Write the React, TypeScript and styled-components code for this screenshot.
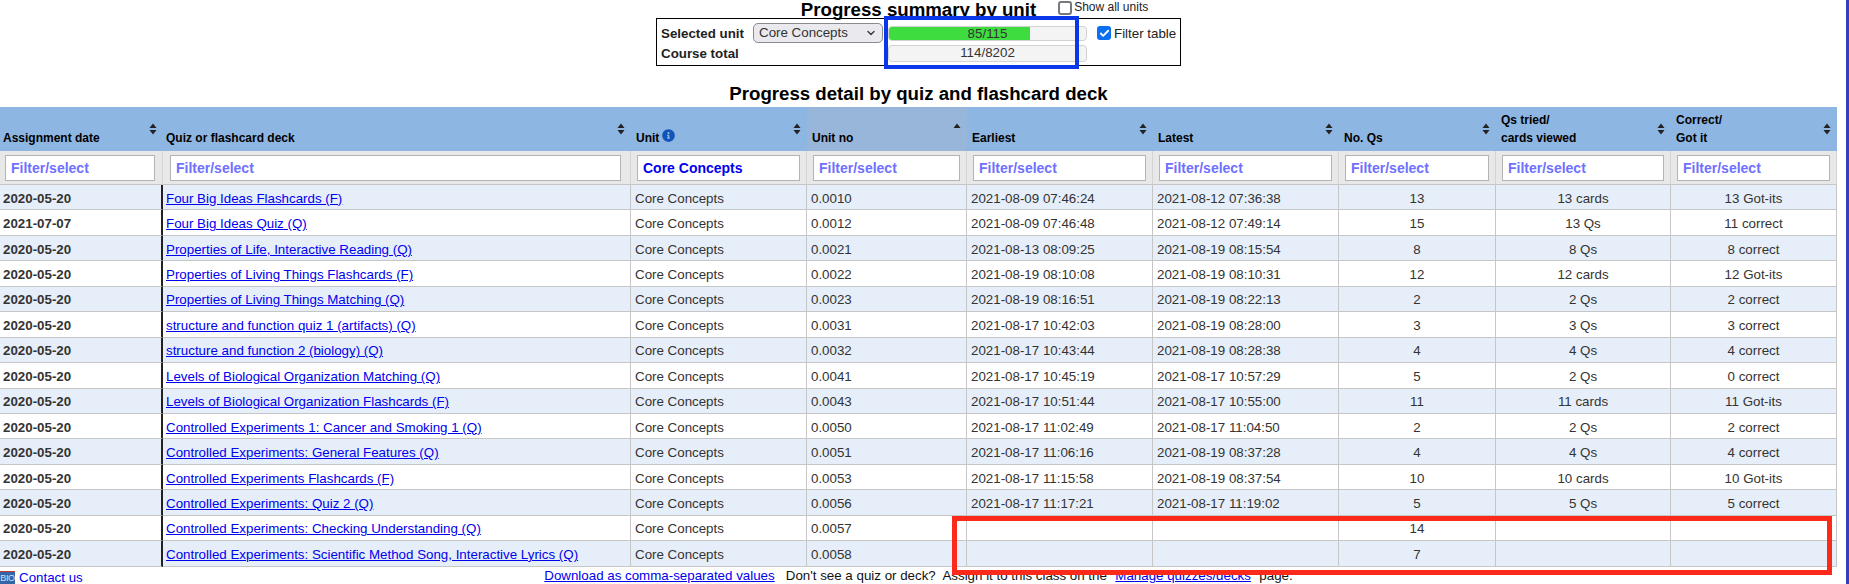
import React from "react";
import styled, { createGlobalStyle } from "styled-components";
import { Check, ChevronDown } from "lucide-react";
import { FaInfoCircle } from "react-icons/fa";

const GlobalStyle = createGlobalStyle`
  html, body {
    margin: 0;
    height: 584px;
    overflow: hidden;
    background: #fff;
    font-family: "Liberation Sans", Arial, sans-serif;
    font-size: 13.33px;
    color: #333;
  }
`;

const COLUMNS = [163, 468, 176, 160, 186, 186, 157, 175, 166];

interface Heading {
  label: string[];
  sort?: "both" | "asc";
  info?: boolean;
}

const HEADINGS: Heading[] = [
  { label: ["Assignment date"] },
  { label: ["Quiz or flashcard deck"] },
  { label: ["Unit"], info: true },
  { label: ["Unit no"], sort: "asc" },
  { label: ["Earliest"] },
  { label: ["Latest"] },
  { label: ["No. Qs"] },
  { label: ["Qs tried/", "cards viewed"] },
  { label: ["Correct/", "Got it"] },
];

type Row = [string, string, string, string?, string?, string?, string?, string?];

const ROWS: Row[] = [
  ["2020-05-20", "Four Big Ideas Flashcards (F)", "0.0010", "2021-08-09 07:46:24", "2021-08-12 07:36:38", "13", "13 cards", "13 Got-its"],
  ["2021-07-07", "Four Big Ideas Quiz (Q)", "0.0012", "2021-08-09 07:46:48", "2021-08-12 07:49:14", "15", "13 Qs", "11 correct"],
  ["2020-05-20", "Properties of Life, Interactive Reading (Q)", "0.0021", "2021-08-13 08:09:25", "2021-08-19 08:15:54", "8", "8 Qs", "8 correct"],
  ["2020-05-20", "Properties of Living Things Flashcards (F)", "0.0022", "2021-08-19 08:10:08", "2021-08-19 08:10:31", "12", "12 cards", "12 Got-its"],
  ["2020-05-20", "Properties of Living Things Matching (Q)", "0.0023", "2021-08-19 08:16:51", "2021-08-19 08:22:13", "2", "2 Qs", "2 correct"],
  ["2020-05-20", "structure and function quiz 1 (artifacts) (Q)", "0.0031", "2021-08-17 10:42:03", "2021-08-19 08:28:00", "3", "3 Qs", "3 correct"],
  ["2020-05-20", "structure and function 2 (biology) (Q)", "0.0032", "2021-08-17 10:43:44", "2021-08-19 08:28:38", "4", "4 Qs", "4 correct"],
  ["2020-05-20", "Levels of Biological Organization Matching (Q)", "0.0041", "2021-08-17 10:45:19", "2021-08-17 10:57:29", "5", "2 Qs", "0 correct"],
  ["2020-05-20", "Levels of Biological Organization Flashcards (F)", "0.0043", "2021-08-17 10:51:44", "2021-08-17 10:55:00", "11", "11 cards", "11 Got-its"],
  ["2020-05-20", "Controlled Experiments 1: Cancer and Smoking 1 (Q)", "0.0050", "2021-08-17 11:02:49", "2021-08-17 11:04:50", "2", "2 Qs", "2 correct"],
  ["2020-05-20", "Controlled Experiments: General Features (Q)", "0.0051", "2021-08-17 11:06:16", "2021-08-19 08:37:28", "4", "4 Qs", "4 correct"],
  ["2020-05-20", "Controlled Experiments Flashcards (F)", "0.0053", "2021-08-17 11:15:58", "2021-08-19 08:37:54", "10", "10 cards", "10 Got-its"],
  ["2020-05-20", "Controlled Experiments: Quiz 2 (Q)", "0.0056", "2021-08-17 11:17:21", "2021-08-17 11:19:02", "5", "5 Qs", "5 correct"],
  ["2020-05-20", "Controlled Experiments: Checking Understanding (Q)", "0.0057", "", "", "14", "", ""],
  ["2020-05-20", "Controlled Experiments: Scientific Method Song, Interactive Lyrics (Q)", "0.0058", "", "", "7", "", ""],
];

const SortIcon = ({ sort }: { sort: "both" | "asc" }) => (
  <svg width="8" height="12" viewBox="0 0 8 12">
    <path d="M4 0.5 L7.5 5 H0.5 Z" fill="#222" />
    {sort === "both" && <path d="M4 11.5 L7.5 7 H0.5 Z" fill="#222" />}
  </svg>
);

const App = () => (
  <Page>
    <GlobalStyle />
    <Main>
      <TitleRow>
        <span />
        <Title>Progress summary by unit</Title>
        <ShowAll>
          <Box />
          Show all units
        </ShowAll>
      </TitleRow>

      <SummaryBox>
        <SummaryLabel>Selected unit</SummaryLabel>
        <SelectWrap>
          Core Concepts
          <ChevronDown size={12} strokeWidth={2.5} />
        </SelectWrap>
        <Bar $tall={false}>
          <BarFill style={{ width: `${(85 / 115) * 100 * 0.97}%` }} />
          <BarText>85/115</BarText>
        </Bar>
        <FilterCheck>
          <Box $checked>
            <Check size={11} strokeWidth={4} color="#fff" />
          </Box>
          Filter table
        </FilterCheck>
        <SummaryLabel>Course total</SummaryLabel>
        <span />
        <Bar $tall>
          <BarText>114/8202</BarText>
        </Bar>
        <span />
      </SummaryBox>

      <DetailTitle>Progress detail by quiz and flashcard deck</DetailTitle>

      <Table>
        <colgroup>
          {COLUMNS.map((w, i) => (
            <col key={i} style={{ width: w }} />
          ))}
        </colgroup>
        <thead>
          <tr>
            {HEADINGS.map((h, i) => (
              <HeadCell key={i} $sorted={h.sort === "asc"}>
                <HeadInner $col={i}>
                  <HeadLabel>
                    {h.label.map((line) => (
                      <div key={line}>
                        {line}
                        {h.info && (
                          <InfoMark>
                            <FaInfoCircle size={13} />
                          </InfoMark>
                        )}
                      </div>
                    ))}
                  </HeadLabel>
                  <SortWrap>
                    <SortIcon sort={h.sort || "both"} />
                  </SortWrap>
                </HeadInner>
              </HeadCell>
            ))}
          </tr>
          <tr>
            {HEADINGS.map((_, i) => (
              <FilterCell key={i} $left={i === 0 ? 5 : i === 1 ? 7 : 6} $right={i === 1 ? 9 : i === 0 ? 7 : 6}>
                <FilterInput
                  $active={i === 2}
                  placeholder="Filter/select"
                  defaultValue={i === 2 ? "Core Concepts" : ""}
                />
              </FilterCell>
            ))}
          </tr>
        </thead>
        <tbody>
          {ROWS.map((r, i) => (
            <BodyRow key={i} $tinted={i % 2 === 0}>
              <DateCell>{r[0]}</DateCell>
              <DeckCell>
                <a href="#">{r[1]}</a>
              </DeckCell>
              <Cell>Core Concepts</Cell>
              <Cell>{r[2]}</Cell>
              <Cell>{r[3]}</Cell>
              <Cell>{r[4]}</Cell>
              <CenterCell>{r[5]}</CenterCell>
              <CenterCell>{r[6]}</CenterCell>
              <CenterCell>{r[7]}</CenterCell>
            </BodyRow>
          ))}
        </tbody>
      </Table>

      <Footer>
        <ContactBlock>
          <BioLogo>BIO</BioLogo>
          <a href="#">Contact us</a>
        </ContactBlock>
        <FooterCenter>
          <a href="#">Download as comma-separated values</a>
          &nbsp;&nbsp; Don't see a quiz or deck?&nbsp; Assign it to this class on the "<a href="#">Manage quizzes/decks</a>" page.
        </FooterCenter>
      </Footer>
    </Main>
    <EdgeStrip />

    {/* hand-drawn annotations laid over the screenshot */}
    <BlueMark />
    <RedMark />
  </Page>
);

const Page = styled.div`
  position: relative;
  display: flex;
  width: 1849px;
  height: 584px;
  overflow: hidden;

  a {
    color: #0000ee;
    text-decoration: underline;
  }
`;

const Main = styled.div`
  flex: 1;
  min-width: 0;
  width: 1837px;
`;

const EdgeStrip = styled.div`
  width: 3px;
  background: #2f3fbd;
`;

const TitleRow = styled.div`
  display: grid;
  grid-template-columns: 1fr auto 1fr;
  width: 1837px;
  height: 18px;
`;

const Title = styled.h1`
  margin: 0;
  font-size: 18.67px;
  line-height: 20px;
  font-weight: bold;
  color: #000;
`;

const ShowAll = styled.label`
  display: flex;
  align-items: flex-start;
  gap: 2px;
  margin: 1px 0 0 22px;
  font-size: 12px;
  line-height: 13px;
  color: #222;
`;

const Box = styled.span<{ $checked?: boolean }>`
  display: inline-flex;
  align-items: center;
  justify-content: center;
  box-sizing: border-box;
  width: 14px;
  height: 14px;
  border-radius: 3px;
  background: ${(p) => (p.$checked ? "#0b6ff0" : "#fff")};
  border: ${(p) => (p.$checked ? "none" : "2px solid #77777f")};
`;

const SummaryBox = styled.div`
  box-sizing: border-box;
  display: grid;
  grid-template-columns: 92px 130px 199px auto;
  grid-template-rows: 20px 17px;
  column-gap: 0;
  row-gap: 2px;
  align-items: center;
  width: 525px;
  height: 48px;
  margin-left: 656px;
  padding: 4px 0 0 4px;
  border: 1px solid #000;
  background: #fff;
`;

const SummaryLabel = styled.div`
  font-weight: bold;
  font-size: 13.33px;
  color: #222;
`;

const SelectWrap = styled.div`
  position: relative;
  box-sizing: border-box;
  height: 20px;
  line-height: 18px;
  padding-left: 5px;
  background: #e9e9ee;
  border: 1px solid #8a8a90;
  border-radius: 5px;
  color: #333;

  svg {
    position: absolute;
    right: 5px;
    top: 3px;
    color: #333;
  }
`;

const Bar = styled.div<{ $tall: boolean }>`
  position: relative;
  box-sizing: border-box;
  width: 199px;
  margin-left: 5px;
  height: ${(p) => (p.$tall ? "17px" : "15px")};
  background: #f4f4f4;
  border: 1px solid #d2d2d2;
  border-radius: 4px;
  overflow: hidden;
`;

const BarFill = styled.div`
  position: absolute;
  left: 0;
  top: 0;
  bottom: 0;
  background: #3fdc3f;
`;

const BarText = styled.div`
  position: relative;
  text-align: center;
  line-height: 13px;
  color: #333;
`;

const FilterCheck = styled.div`
  display: flex;
  align-items: center;
  gap: 3px;
  margin-left: 15px;
  font-size: 13.33px;
  color: #222;
  white-space: nowrap;
`;

const DetailTitle = styled.h2`
  width: 1837px;
  margin: 16px 0 0;
  height: 25px;
  line-height: 24px;
  text-align: center;
  font-size: 18.67px;
  font-weight: bold;
  color: #000;
`;

const Table = styled.table`
  table-layout: fixed;
  width: 1837px;
  border-collapse: separate;
  border-spacing: 0;
`;

const HeadCell = styled.th<{ $sorted: boolean }>`
  height: 44px;
  padding: 0;
  text-align: left;
  vertical-align: bottom;
  background: ${(p) => (p.$sorted ? "#97b6da" : "#8db6e2")};
  color: #000;
  font-size: 12px;
  font-weight: bold;
`;

const HeadInner = styled.div<{ $col: number }>`
  display: flex;
  justify-content: space-between;
  align-items: flex-start;
  height: 44px;
  box-sizing: border-box;
  padding: 0 6px 0 ${(p) => (p.$col === 0 ? 3 : p.$col === 1 ? 3 : 5)}px;
`;

const HeadLabel = styled.div`
  align-self: flex-end;
  padding-bottom: 4px;
  line-height: 18px;
`;

const SortWrap = styled.div`
  margin-top: 16px;
  line-height: 0;
`;

const InfoMark = styled.span`
  display: inline-block;
  margin-left: 3px;
  color: #1155bb;
  vertical-align: 0;
  line-height: 0;
`;

const FilterCell = styled.th<{ $left: number; $right: number }>`
  box-sizing: border-box;
  height: 34px;
  padding: 0 ${(p) => p.$right}px 0 ${(p) => p.$left}px;
  background: #e8e8e8;
  border-right: 1px solid #d4d4d4;
  border-bottom: 1px solid #c6c6c6;
`;

const FilterInput = styled.input<{ $active: boolean }>`
  box-sizing: border-box;
  display: block;
  width: 100%;
  height: 26px;
  padding: 1px 5px 0;
  border: 1px solid #b4b4b4;
  border-radius: 0;
  outline: none;
  background: #fff;
  font-family: "Liberation Sans", Arial, sans-serif;
  font-size: 14px;
  font-weight: bold;
  color: ${(p) => (p.$active ? "#0000ee" : "#7070ff")};

  &::placeholder {
    color: #7070ff;
    opacity: 1;
  }
`;

const BodyRow = styled.tr<{ $tinted: boolean }>`
  height: 25.45px;
  background: ${(p) => (p.$tinted ? "#e6eef9" : "#fff")};
`;

const Cell = styled.td`
  box-sizing: border-box;
  padding: 2px 0 0 4px;
  border-right: 1px solid #c6c6c6;
  border-bottom: 1px solid #c6c6c6;
  white-space: nowrap;
  overflow: hidden;
`;

const DateCell = styled(Cell)`
  padding-left: 3px;
  font-weight: bold;
  border-right: 2px solid #222;
`;

const DeckCell = styled(Cell)`
  padding-left: 3px;
`;

const CenterCell = styled(Cell)`
  padding-left: 0;
  text-align: center;
`;

const Footer = styled.div`
  display: grid;
  grid-template-columns: 1fr auto 1fr;
  width: 1837px;
  color: #111;
`;

const ContactBlock = styled.div`
  display: flex;
  align-items: flex-start;
  gap: 4px;
  height: 17px;

  a {
    margin-top: 4px;
    line-height: 13px;
    text-decoration: none;
  }
`;

const BioLogo = styled.div`
  box-sizing: border-box;
  width: 15px;
  height: 13px;
  margin-top: 4px;
  border-top: 1px solid #c23b2e;
  background: #3465a8;
  color: #cfe0f5;
  font-size: 9px;
  letter-spacing: -0.3px;
  line-height: 12px;
  text-align: center;
`;

const FooterCenter = styled.div`
  line-height: 16px;
  margin-top: 1px;
  white-space: nowrap;
`;

const BlueMark = styled.div`
  position: absolute;
  left: 884px;
  top: 16px;
  width: 195px;
  height: 53px;
  box-sizing: border-box;
  border: 4px solid #0a37e8;
`;

const RedMark = styled.div`
  position: absolute;
  left: 952px;
  top: 516px;
  width: 880px;
  height: 59px;
  box-sizing: border-box;
  border: 5px solid #fb2a1a;
`;

export default App;
